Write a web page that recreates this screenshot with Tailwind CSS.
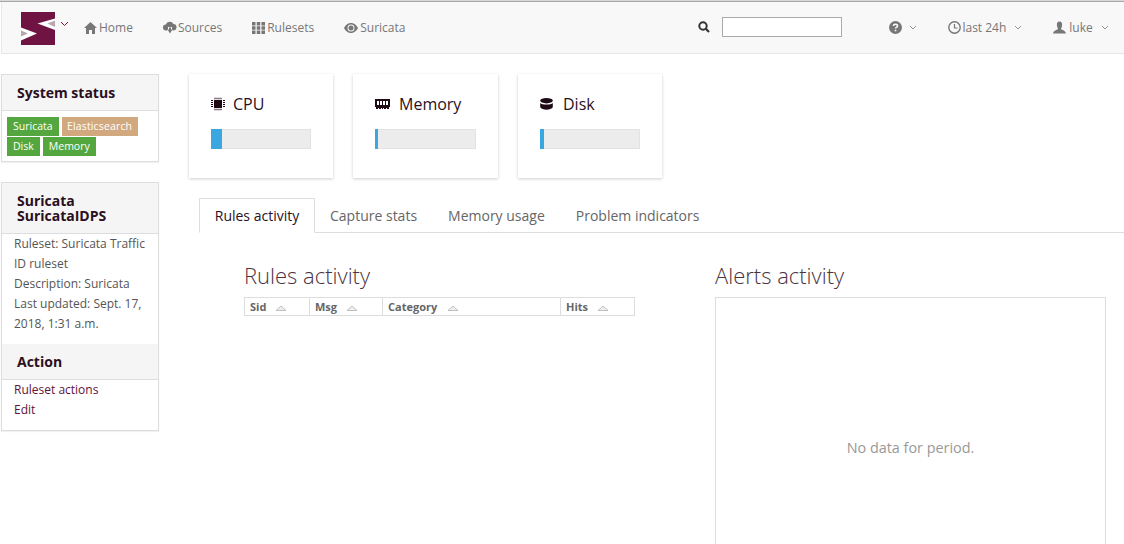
<!DOCTYPE html>
<html lang="en">
<head>
    <meta charset="UTF-8">
    <title>Suricata</title>
    <script src="https://cdn.jsdelivr.net/npm/@tailwindcss/browser@4"></script>
</head>
<body class="bg-white h-[544px] overflow-hidden font-['Open_Sans',sans-serif] text-[12px] text-[#555]">
    <!-- top navigation -->
    <div class="h-px bg-[#d8d8d8]"></div>
    <div class="h-px bg-[#a8a8a8]"></div>
    <nav class="h-[52px] ml-px bg-[#f8f8f8] border-b border-b-[#e7e7e7] border-l border-l-[#e7e7e7] flex items-center text-[#777]">
        <svg class="ml-[19px] w-[34px] h-[33px] mt-px" viewBox="0 0 34 33">
            <rect width="34" height="33" fill="#6f1342"/>
            <path d="M34 6.500 L16.500 11.500 L34 18 Z" fill="#fff"/>
            <path d="M34 8.500 L26.500 11.500 L34 15 Z" fill="#b9a6ae"/>
            <path d="M0 15.500 L16 21.500 L0 28.500 Z" fill="#fff"/>
            <path d="M0 18.500 L7 21.500 L0 24.500 Z" fill="#b9a6ae"/>
        </svg>
        <svg class="ml-[5px] mb-[8px] w-[9px] h-[6px]" viewBox="0 0 9 6"><path d="M1 1 L4.500 4.500 L8 1" fill="none" stroke="#6f1342" stroke-width="1"/></svg>
        <a class="ml-[15px] flex items-center gap-[2px]">
            <svg class="w-[13px] h-[12px]" viewBox="0 0 13 12"><path d="M6.500 0 L13 6 H11 V12 H8 V8 H5 V12 H2 V6 H0 Z" fill="#777"/></svg>
            Home
        </a>
        <a class="ml-[30px] flex items-center gap-[1px]">
            <svg class="w-[14px] h-[13px]" viewBox="0 0 14 13"><path d="M3 9.500 A3 3 0 0 1 2.800 3.500 A4.200 4.200 0 0 1 10.500 3 A3.300 3.300 0 0 1 11 9.500 H9.800 L9 8 V6 H5 V8 L4.200 9.500 Z M4.500 8.500 H6 V6.500 H8 V8.500 H9.500 L7 12.500 Z" fill="#777"/></svg>
            Sources
        </a>
        <a class="ml-[30px] flex items-center gap-[2px]">
            <svg class="w-[13px] h-[12px]" viewBox="0 0 13 12"><path d="M0 0h3.500v3.500H0zM4.750 0h3.500v3.500h-3.500zM9.500 0H13v3.500H9.500zM0 4.250h3.500v3.500H0zM4.750 4.250h3.500v3.500h-3.500zM9.500 4.250H13v3.500H9.500zM0 8.500h3.500V12H0zM4.750 8.500h3.500V12h-3.500zM9.500 8.500H13V12H9.500z" fill="#777"/></svg>
            Rulesets
        </a>
        <a class="ml-[30px] flex items-center gap-[2px]">
            <svg class="w-[14px] h-[10px]" viewBox="0 0 14 10"><path fill-rule="evenodd" d="M0 5 C2 1 5 0 7 0 C9 0 12 1 14 5 C12 9 9 10 7 10 C5 10 2 9 0 5 Z M7 1.500 A3.500 3.500 0 1 0 7 8.500 A3.500 3.500 0 1 0 7 1.500 Z" fill="#777"/><circle cx="7" cy="5" r="2.500" fill="#777"/></svg>
            Suricata
        </a>
        <svg class="ml-[293px] w-[12px] h-[12px] mb-[2px]" viewBox="0 0 12 12"><circle cx="5" cy="5" r="3.700" fill="none" stroke="#333" stroke-width="2"/><path d="M7.800 7.800 L11 11" stroke="#333" stroke-width="2.200"/></svg>
        <input class="ml-[12px] mb-[2px] w-[120px] h-[20px] bg-white border border-[#aaa]" type="text">
        <svg class="ml-[47px] w-[13px] h-[13px]" viewBox="0 0 13 13"><circle cx="6.500" cy="6.500" r="6.500" fill="#777"/><path d="M4.500 5 C4.500 2.800 8.500 2.800 8.500 5 C8.500 6.500 6.500 6.300 6.500 7.500" fill="none" stroke="#f8f8f8" stroke-width="1.500"/><rect x="5.700" y="8.700" width="1.600" height="1.600" fill="#f8f8f8"/></svg>
        <svg class="ml-[7px] w-[8px] h-[5px]" viewBox="0 0 8 5"><path d="M1 1 L4 4 L7 1" fill="none" stroke="#888" stroke-width="0.900"/></svg>
        <svg class="ml-[31px] w-[13px] h-[13px]" viewBox="0 0 13 13"><circle cx="6.500" cy="6.500" r="5.700" fill="none" stroke="#777" stroke-width="1.400"/><path d="M6.500 3 V7 H9.500" fill="none" stroke="#777" stroke-width="1.200"/></svg>
        <span class="ml-[1px]">last 24h</span>
        <svg class="ml-[8px] w-[8px] h-[5px]" viewBox="0 0 8 5"><path d="M1 1 L4 4 L7 1" fill="none" stroke="#888" stroke-width="0.900"/></svg>
        <svg class="ml-[31px] w-[13px] h-[13px]" viewBox="0 0 14 13"><path d="M7 0 C9.500 0 10 2 9.800 4 C9.600 6 9 7 8.500 7.800 C9 9 13.500 9.500 14 13 H0 C0.500 9.500 5 9 5.500 7.800 C5 7 4.400 6 4.200 4 C4 2 4.500 0 7 0 Z" fill="#777"/></svg>
        <span class="ml-[3px]">luke</span>
        <svg class="ml-[8px] w-[8px] h-[5px]" viewBox="0 0 8 5"><path d="M1 1 L4 4 L7 1" fill="none" stroke="#888" stroke-width="0.900"/></svg>
    </nav>

    <div class="flex">
        <!-- sidebar -->
        <aside class="ml-px w-[158px] pt-[20px] shrink-0 flex flex-col gap-[20px]">
            <section class="border border-[#ddd] shadow-[0_1px_1px_rgba(0,0,0,0.05)] h-[88px]">
                <h3 class="h-[36px] bg-[#f5f5f5] border-b border-[#ddd] pl-[15px] flex items-center text-[14px] font-bold text-[#2a0f1e]">System status</h3>
                <div class="pl-[5px] pt-[6px] flex flex-wrap gap-x-[3px] gap-y-[1px] w-[150px] text-[10.500px] leading-[19px] text-white">
                    <span class="bg-[#54a73e] px-[6px]">Suricata</span>
                    <span class="bg-[#d2a97f] w-[76px] text-center tracking-[0.15px]">Elasticsearch</span>
                    <span class="bg-[#54a73e] px-[6px]">Disk</span>
                    <span class="bg-[#54a73e] px-[6px]">Memory</span>
                </div>
            </section>
            <section class="border border-[#ddd] shadow-[0_1px_1px_rgba(0,0,0,0.05)] h-[249px]">
                <h3 class="h-[51px] bg-[#f5f5f5] border-b border-[#ddd] pl-[15px] flex flex-col justify-center text-[14px] leading-[15px] font-bold text-[#2a0f1e]"><span>Suricata</span><span>SuricataIDPS</span></h3>
                <div class="pl-[12px] pr-[8px] leading-[20px] h-[110px] text-[#555]">
                    <p>Ruleset: Suricata Traffic ID ruleset</p>
                    <p>Description: Suricata</p>
                    <p>Last updated: Sept. 17, 2018, 1:31 a.m.</p>
                </div>
                <h3 class="h-[36px] bg-[#f5f5f5] border-b border-[#ddd] pl-[15px] flex items-center text-[14px] font-bold text-[#2a0f1e]">Action</h3>
                <div class="pl-[12px] leading-[20px] text-[#5e1239]">
                    <a class="block">Ruleset actions</a>
                    <a class="block">Edit</a>
                </div>
            </section>
        </aside>

        <!-- main content -->
        <main class="flex-1 min-w-0 pl-[30px] pt-[20px]">
            <div class="flex gap-[20px]">
                <div class="w-[144px] h-[104px] bg-white shadow-[0_1px_3px_rgba(0,0,0,0.2)] pl-[22px] pt-[18px]">
                    <div class="flex items-center h-[24px] text-[16px] text-[#2a0f1e]">
                        <svg class="w-[14px] h-[14px]" viewBox="0 0 14 14"><rect x="3" y="3" width="8" height="8" fill="#1e0a14"/><path d="M0 3.500h2M0 5.500h2M0 7.500h2M0 9.500h2M12 3.500h2M12 5.500h2M12 7.500h2M12 9.500h2" stroke="#1e0a14"/><path d="M3 1.500h8M3 12.500h8" stroke="#8a7a82" stroke-width="1.500"/></svg>
                        <span class="ml-[8px]">CPU</span>
                    </div>
                    <div class="mt-[13px] w-[100px] h-[20px] bg-[#ececec] border border-[#e2e2e2]"><div class="h-[20px] -mt-px -ml-px bg-[#3ba7e0]" style="width:11px"></div></div>
                </div>
                <div class="w-[145px] h-[104px] bg-white shadow-[0_1px_3px_rgba(0,0,0,0.2)] pl-[22px] pt-[18px]">
                    <div class="flex items-center h-[24px] text-[16px] text-[#2a0f1e]">
                        <svg class="w-[15px] h-[10px]" viewBox="0 0 15 10"><path fill-rule="evenodd" d="M0 0h15v8h-1v2h-2v-1h-1v1h-2v-1h-1v1h-1v-1h-1v1h-2v-1h-1v1h-2v-2h-1z M2 2v4h2V2z M5 2v4h2V2z M8 2v4h2V2z M11 2v4h2V2z" fill="#1e0a14"/></svg>
                        <span class="ml-[9px]">Memory</span>
                    </div>
                    <div class="mt-[13px] w-[101px] h-[20px] bg-[#ececec] border border-[#e2e2e2]"><div class="h-[20px] -mt-px -ml-px bg-[#3ba7e0]" style="width:3px"></div></div>
                </div>
                <div class="w-[144px] h-[104px] bg-white shadow-[0_1px_3px_rgba(0,0,0,0.2)] pl-[22px] pt-[18px]">
                    <div class="flex items-center h-[24px] text-[16px] text-[#2a0f1e]">
                        <svg class="w-[13px] h-[12px]" viewBox="0 0 13 12"><ellipse cx="6.500" cy="2.700" rx="6.300" ry="2.700" fill="#1e0a14"/><path d="M0.200 5 C2 7 11 7 12.800 5 V9.300 C11 12.600 2 12.600 0.200 9.300 Z" fill="#1e0a14"/></svg>
                        <span class="ml-[10px]">Disk</span>
                    </div>
                    <div class="mt-[13px] w-[100px] h-[20px] bg-[#ececec] border border-[#e2e2e2]"><div class="h-[20px] -mt-px -ml-px bg-[#3ba7e0]" style="width:4px"></div></div>
                </div>
            </div>

            <!-- tabs -->
            <div class="mt-[20px] ml-[10px] h-[35px] border-b border-[#ddd] flex text-[14px] text-[#666]">
                <a class="w-[116px] h-[35px] bg-white border border-[#ddd] border-b-white flex items-center justify-center text-[#2a0f1e]">Rules activity</a>
                <a class="ml-[15px] h-[34px] flex items-center">Capture stats</a>
                <a class="ml-[31px] h-[34px] flex items-center">Memory usage</a>
                <a class="ml-[31px] h-[34px] flex items-center">Problem indicators</a>
            </div>

            <div class="flex mt-[28px]">
                <div class="ml-[55px] w-[391px]">
                    <h2 class="text-[22px] leading-[28px] font-light text-[#4a3340]">Rules activity</h2>
                    <table class="mt-[8px] w-[391px] table-fixed border border-[#ddd] text-[11px] leading-[16px] font-bold text-[#666] h-[19px]">
                        <tr class="h-[17px]">
                            <th class="w-[65px] border-r border-[#ddd] pl-[5px] pt-px text-left">Sid <span class="ml-[6px] inline-block w-[12px]"><svg class="w-[12px] h-[6px]" viewBox="0 0 12 6"><path d="M1 5.500 L6 1 L11 5.500 Z" fill="#eee" stroke="#aaa" stroke-width="0.700"/></svg></span></th>
                            <th class="w-[73px] border-r border-[#ddd] pl-[5px] pt-px text-left">Msg <span class="ml-[6px] inline-block w-[12px]"><svg class="w-[12px] h-[6px]" viewBox="0 0 12 6"><path d="M1 5.500 L6 1 L11 5.500 Z" fill="#eee" stroke="#aaa" stroke-width="0.700"/></svg></span></th>
                            <th class="w-[178px] border-r border-[#ddd] pl-[5px] pt-px text-left">Category <span class="ml-[7px] inline-block w-[12px]"><svg class="w-[12px] h-[6px]" viewBox="0 0 12 6"><path d="M1 5.500 L6 1 L11 5.500 Z" fill="#eee" stroke="#aaa" stroke-width="0.700"/></svg></span></th>
                            <th class="pl-[5px] pt-px text-left">Hits <span class="ml-[6px] inline-block w-[12px]"><svg class="w-[12px] h-[6px]" viewBox="0 0 12 6"><path d="M1 5.500 L6 1 L11 5.500 Z" fill="#eee" stroke="#aaa" stroke-width="0.700"/></svg></span></th>
                        </tr>
                    </table>
                </div>
                <div class="ml-[80px] w-[391px]">
                    <h2 class="text-[22px] leading-[28px] font-light text-[#4a3340]">Alerts activity</h2>
                    <div class="mt-[8px] h-[302px] border border-[#ddd] flex items-center justify-center text-[14.400px] text-[#999]">No data for period.</div>
                </div>
            </div>
        </main>
    </div>
</body>
</html>
